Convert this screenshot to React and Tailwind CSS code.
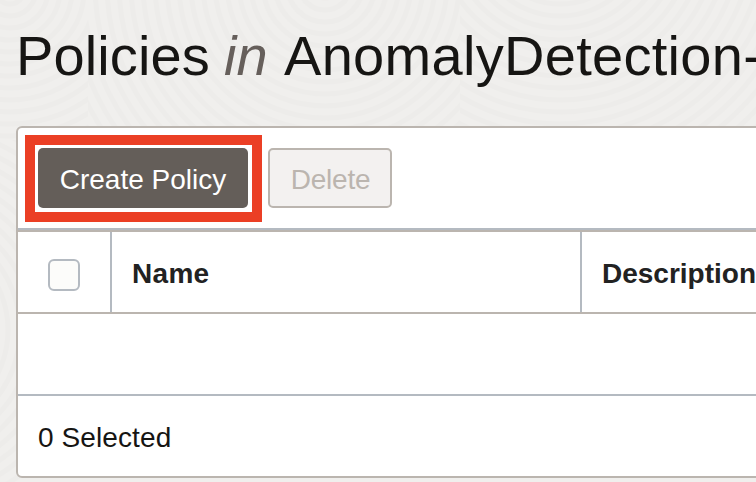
const rings = [
  { id: 'a', cx: 10, cy: -10, x: 0, w: 88 },
  { id: 'b', cx: 325, cy: -16, x: 88, w: 372 },
  { id: 'c', cx: 560, cy: -70, x: 460, w: 296 },
  { id: 'd', cx: -90, cy: 330, x: 0, w: 20 },
];

function Backdrop() {
  return (
    <svg className="absolute inset-0 h-full w-full" fill="none" aria-hidden="true">
      {rings.map((r) => (
        <g key={r.id}>
          <clipPath id={r.id}>
            <rect x={r.x} y={r.id === 'd' ? 140 : 0} width={r.w} height={r.id === 'd' ? 342 : 140} />
          </clipPath>
          <g clipPath={`url(#${r.id})`} stroke="#edecea" strokeWidth="5">
            {Array.from({ length: 24 }, (_, i) => (
              <circle key={i} cx={r.cx} cy={r.cy} r={14 + i * 12} />
            ))}
          </g>
        </g>
      ))}
    </svg>
  );
}

export default function App() {
  return (
    <div className="relative h-[482px] w-[756px] overflow-hidden bg-[#f0efed] font-['Liberation_Sans',Arial,sans-serif] text-[#161513]">
      <Backdrop />
      <main className="relative w-[900px] pl-4">
        <h1 className="flex h-[126px] items-start pt-6 text-[56px] leading-[64px] whitespace-nowrap">
          <span className="w-[208px] tracking-[0.1px]">Policies</span>
          <span className="w-[60px] text-[#665f5b] italic">in</span>
          <span className="tracking-[0.3px]">AnomalyDetection-</span>
        </h1>
        <section className="overflow-hidden rounded-[6px] border-2 border-[#bbb5af] bg-white">
          <div className="flex h-[102px] items-start border-b-2 border-[#b4bac1] pt-[7px] pl-[7px]">
            <div className="h-[87px] w-[237px] border-[10px] border-[#eb3f25] pt-[3px] pl-[3px]">
              <button className="flex h-[60px] w-[210px] items-center justify-center rounded-[5px] bg-[#645e59] pt-1 text-[28px] text-white">
                Create Policy
              </button>
            </div>
            <button className="mt-[13px] ml-[6px] flex h-[60px] w-[124px] items-center justify-center rounded-[5px] border-2 border-[#bbb5af] bg-[#f3f1f0] pt-1 pl-px text-[28px] tracking-[-0.2px] text-[#bbb5af]">
              Delete
            </button>
          </div>
          <div className="flex h-[84px] border-y-2 border-[#bbb5af] text-[28px] font-bold text-[#222]">
            <div className="flex w-[94px] items-start border-r-2 border-[#b4bac1] pt-[27px] pl-[30px]">
              <span className="h-8 w-8 rounded-[6px] border-2 border-[#b4bac1] bg-[#fcfcfa]" />
            </div>
            <div className="flex w-[470px] items-center border-r-2 border-[#b4bac1] pt-1 pl-5 tracking-[0.3px]">Name</div>
            <div className="flex items-center pt-1 pl-5">Description</div>
          </div>
          <div className="h-[82px] border-b-2 border-[#b4bac1]" />
          <div className="flex h-20 items-center pt-1 pl-5 text-[28px] tracking-[0.1px]">0 Selected</div>
        </section>
      </main>
    </div>
  );
}
